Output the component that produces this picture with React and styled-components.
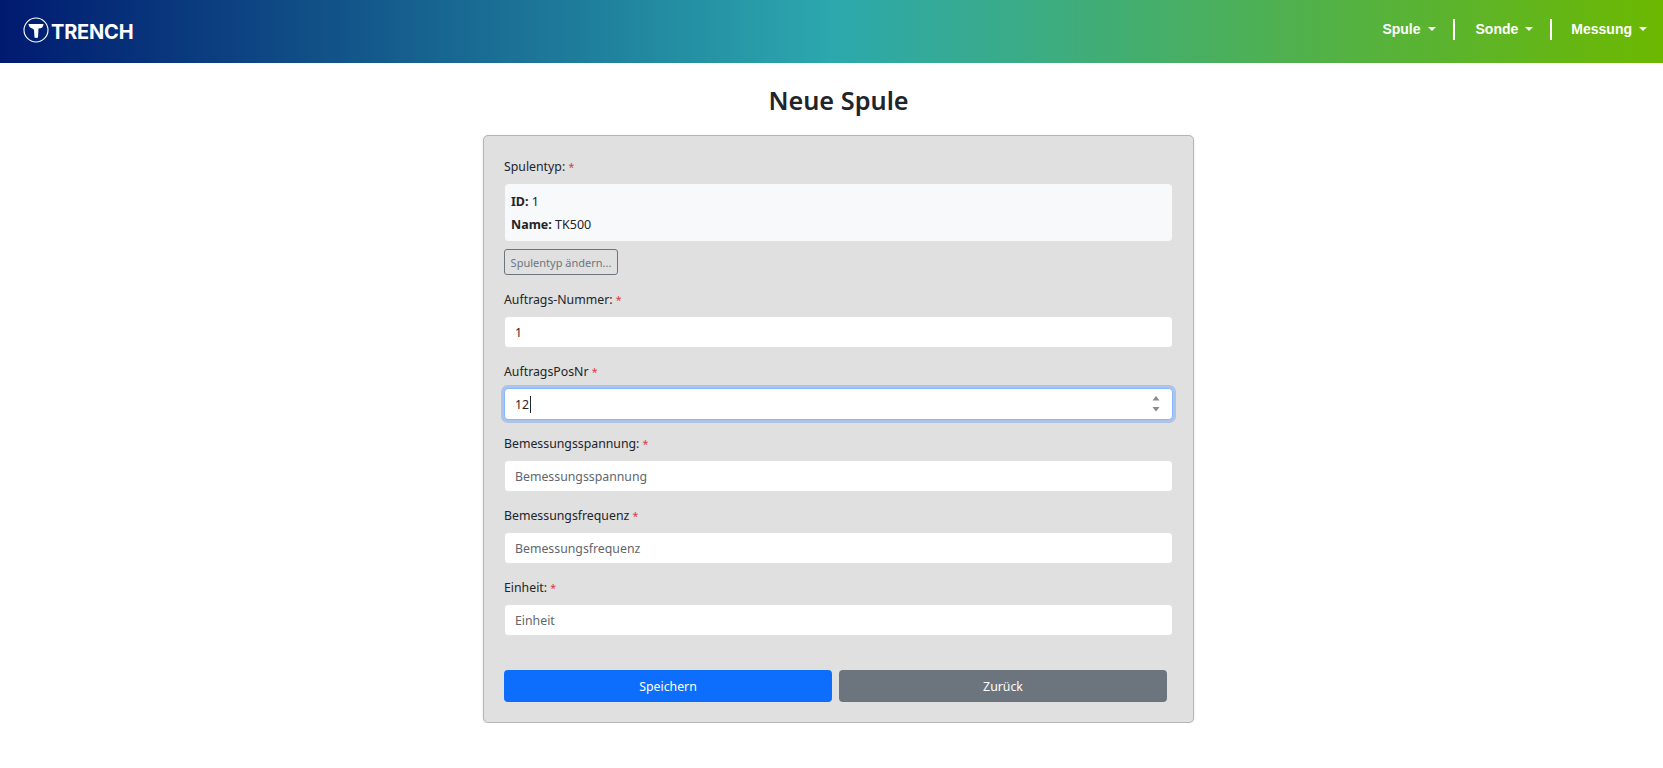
import React from "react";
import styled, { createGlobalStyle } from "styled-components";

const Global = createGlobalStyle`
  html, body { margin: 0; padding: 0; background: #fff; }
  body { font-family: "Noto Sans", "Open Sans", sans-serif; font-size: 12.5px; color: #212529; }
  * { box-sizing: border-box; }
`;
const Header = styled.header`
  height: 63px;
  display: flex;
  align-items: center;
  justify-content: space-between;
  padding: 0 16px 0 23px;
  background: linear-gradient(90deg, #001a70 0%, #2ca8ae 50%, #6cb800 100%);
`;
const Logo = styled.div`
  display: flex;
  align-items: center;
  gap: 2px;
  color: #fff;
  font-family: "Inter", sans-serif;
  font-weight: 700;
  font-size: 20px;
  letter-spacing: -0.2px;
  line-height: 26px;
  svg { margin-top: -3px; }
`;
const Nav = styled.nav`
  display: flex;
  align-items: center;
  margin-top: -4px;
`;
const NavItem = styled.a`
  display: flex;
  align-items: center;
  gap: 7px;
  height: 21px;
  padding-bottom: 2px;
  color: #fff;
  font-family: "Liberation Sans", Arial, sans-serif;
  font-weight: 700;
  font-size: 14px;
  padding-left: ${(p) => (p.$last ? "19px" : "21px")};
  padding-right: ${(p) => (p.$last ? "0" : "17px")};
  border-right: ${(p) => (p.$last ? "none" : "2px solid #fff")};
  &::after {
    content: "";
    border-top: 4px solid #fff;
    border-left: 4px solid transparent;
    border-right: 4px solid transparent;
  }
`;
const Main = styled.main`
  padding-left: 14px;
`;
const Title = styled.h1`
  margin: 20px 0 17px;
  text-align: center;
  font-size: 25.3px;
  line-height: 35px;
  font-weight: 600;
  color: #212529;
`;
const Card = styled.form`
  width: 711px;
  margin: 0 auto;
  height: 588px;
  padding: 21px 20px 20px;
  background: #e0e0e0;
  border: 1px solid #b5b5b5;
  border-radius: 5px;
  box-shadow: 0 1px 3px rgba(0, 0, 0, 0.1);
`;
const Group = styled.div`
  margin-bottom: 14px;
`;
const Label = styled.label`
  display: block;
  height: 20px;
  line-height: 20px;
  margin-bottom: 6px;
  font-size: 12.3px;
`;
const Req = styled.span`
  color: #dc3545;
  font-size: 10.5px;
`;
const Info = styled.div`
  margin: 7px 0 8px 1px;
  padding: 6px;
  height: 57px;
  width: 667px;
  background: #f8f9fa;
  border-radius: 4px;
  line-height: 23px;
`;
const Line = styled.div``;
const ChangeBtn = styled.button`
  display: block;
  height: 26px;
  width: 114px;
  padding: 0;
  margin-bottom: 15px;
  background: transparent;
  color: #6c757d;
  border: 1px solid #6c757d;
  border-radius: 3px;
  font: inherit;
  font-size: 11px;
`;
const Input = styled.input`
  display: block;
  width: 669px;
  height: 32px;
  padding: 0 10px;
  background: #fff;
  border: 1px solid #e0e0e0;
  border-radius: 4px;
  font: inherit;
  font-size: 12.3px;
  color: #212529;
  outline: none;
  &::placeholder { color: #5f666d; opacity: 1; }
`;
const FocusBox = styled.div`
  position: relative;
  display: flex;
  align-items: center;
  width: 669px;
  height: 32px;
  padding: 0 10px;
  background: #fff;
  border: 1px solid #86b7fe;
  border-radius: 4px;
  font-size: 12.3px;
  box-shadow: 0 0 0 3px rgba(13, 110, 253, 0.25);
`;
const Caret = styled.span`
  display: inline-block;
  width: 1px;
  height: 17px;
  background: #212529;
  margin-left: 1px;
`;
const Spin = styled.svg`
  position: absolute;
  right: 12px;
  top: 7px;
`;
const Actions = styled.div`
  display: flex;
  gap: 7px;
  margin-top: 34px;
`;
const Btn = styled.button`
  width: 328px;
  height: 32px;
  border: none;
  border-radius: 4px;
  color: #fff;
  font: inherit;
  font-size: 12.3px;
  background: ${(p) => p.$bg};
`;

const Field = ({ label, colon, value, placeholder }) => (
  <Group>
    <Label>{label}{colon ? ":" : ""} <Req>*</Req></Label>
    <Input readOnly value={value ?? ""} placeholder={placeholder} />
  </Group>
);

export default function App() {
  return (
    <>
      <Global />
      <Header>
        <Logo>
          <svg width="26" height="26" viewBox="0 0 26 26">
            <circle cx="13" cy="13" r="12" fill="none" stroke="#fff" strokeWidth="1.1" />
            <path d="M5.5 7 H20.5 C20.5 10 18.5 11.5 15.5 11.5 L15 20.5 C14 21 12.5 21 11.5 20.5 L11 13 C10.5 11.5 9 11.5 8 11 C6.5 10.3 5.7 9 5.5 7 Z" fill="#fff" />
          </svg>
          TRENCH
        </Logo>
        <Nav>
          <NavItem>Spule</NavItem>
          <NavItem>Sonde</NavItem>
          <NavItem $last>Messung</NavItem>
        </Nav>
      </Header>
      <Main>
        <Title>Neue Spule</Title>
        <Card>
          <Group>
            <Label>Spulentyp: <Req>*</Req></Label>
            <Info>
              <Line><b>ID:</b> 1</Line>
              <Line><b>Name:</b> TK500</Line>
            </Info>
            <ChangeBtn type="button">Spulentyp ändern...</ChangeBtn>
          </Group>
          <Field label="Auftrags-Nummer" colon value="1" />
          <Group>
            <Label>AuftragsPosNr <Req>*</Req></Label>
            <FocusBox>
              12<Caret />
              <Spin width="8" height="16" viewBox="0 0 8 16">
                <path d="M4 0 L7.5 4.5 H0.5 Z M0.5 11 H7.5 L4 15.5 Z" fill="#8a8a8a" />
              </Spin>
            </FocusBox>
          </Group>
          <Field label="Bemessungsspannung" colon placeholder="Bemessungsspannung" />
          <Field label="Bemessungsfrequenz" placeholder="Bemessungsfrequenz" />
          <Field label="Einheit" colon placeholder="Einheit" />
          <Actions>
            <Btn type="button" $bg="#0d6efd">Speichern</Btn>
            <Btn type="button" $bg="#6c757d">Zurück</Btn>
          </Actions>
        </Card>
      </Main>
    </>
  );
}
